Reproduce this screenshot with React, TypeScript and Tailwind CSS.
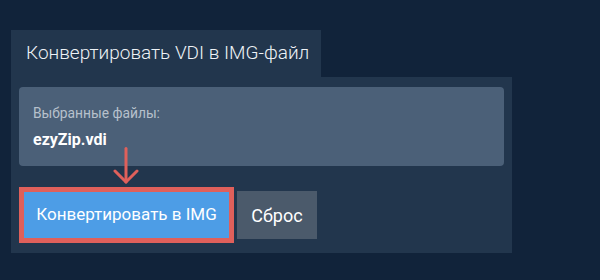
import React from 'react';

const font = { fontFamily: 'Roboto, "Liberation Sans", sans-serif' };

const DownArrow: React.FC = () => (
  <svg
    className="absolute left-[113px] top-[147px]"
    width="26"
    height="38"
    viewBox="0 0 26 38"
    fill="none"
    stroke="#e0605b"
    strokeWidth="3"
    strokeLinecap="round"
    strokeLinejoin="round"
  >
    <line x1="13" y1="1.5" x2="13" y2="35" />
    <polyline points="2,24 13,35 24,24" />
  </svg>
);

const App: React.FC = () => {
  return (
    <div className="relative w-[600px] h-[280px] bg-[#11233a] pt-[30px] pl-[11px]" style={font}>
      {/* Tab header */}
      <div className="w-[310px] h-[47px] bg-[#22364d] pl-[15px] pt-[9px]">
        <h1 className="whitespace-nowrap text-[19px] font-light leading-[28px] text-[#eef2f6]">
          Конвертировать VDI в IMG-файл
        </h1>
      </div>

      {/* Panel */}
      <div className="w-[501px] bg-[#22364d] px-[8px] pt-[10px] pb-[10px]">
        <div className="h-[79px] rounded-[4px] bg-[#4b6078] px-[14px] pt-[17px]">
          <div className="text-[13.8px] leading-[18px] text-[#b7c1cc]">Выбранные файлы:</div>
          <div className="mt-[8px] text-[16px] font-bold leading-[20px] text-white">ezyZip.vdi</div>
        </div>

        <div className="mt-[21px] flex items-center gap-[3px]">
          <div className="border-[5px] border-[#e0605b]">
            <button className="h-[46px] w-[205px] whitespace-nowrap bg-[#4d9de6] text-[17px] text-white">
              Конвертировать в IMG
            </button>
          </div>
          <button className="h-[48px] w-[80px] bg-[#4b5a6b] text-[18px] text-white">Сброс</button>
        </div>
      </div>

      <DownArrow />
    </div>
  );
};

export default App;
